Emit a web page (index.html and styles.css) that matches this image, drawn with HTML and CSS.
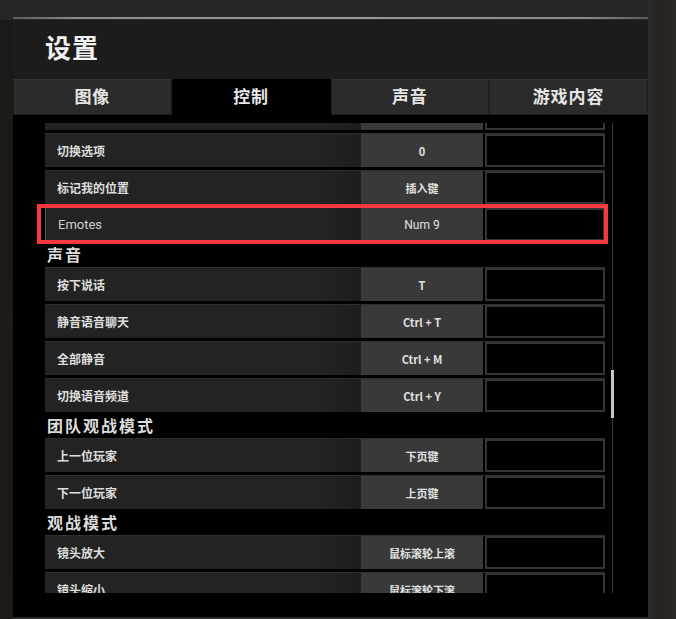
FILE: index.html
```html
<!DOCTYPE html>
<html lang="zh-CN">
<head>
    <meta charset="UTF-8">
    <meta name="viewport" content="width=device-width, initial-scale=1.0">
    <title>设置</title>
    <link rel="stylesheet" href="styles.css">
</head>
<body>
    <div class="screen">
        <div class="edge-left"></div>

        <div class="panel">
            <div class="topline"></div>
            <header class="panel-head">
                <h1>设置</h1>
            </header>

            <nav class="tabs">
                <a class="tab">图像</a>
                <a class="tab active">控制</a>
                <a class="tab">声音</a>
                <a class="tab">游戏内容</a>
            </nav>

            <main class="panel-body">
                <div class="list">
                    <div class="rows">
                        <div class="row partial">
                            <div class="label"></div>
                            <div class="key"></div>
                            <div class="slot"></div>
                        </div>
                        <div class="row">
                            <div class="label">切换选项</div>
                            <div class="key">0</div>
                            <div class="slot"></div>
                        </div>
                        <div class="row">
                            <div class="label">标记我的位置</div>
                            <div class="key">插入键</div>
                            <div class="slot"></div>
                        </div>
                        <div class="row marked">
                            <div class="label latin">Emotes</div>
                            <div class="key latin">Num 9</div>
                            <div class="slot"></div>
                            <div class="highlight"></div>
                        </div>

                        <h2 class="group">声音</h2>
                        <div class="row">
                            <div class="label">按下说话</div>
                            <div class="key">T</div>
                            <div class="slot"></div>
                        </div>
                        <div class="row">
                            <div class="label">静音语音聊天</div>
                            <div class="key">Ctrl + T</div>
                            <div class="slot"></div>
                        </div>
                        <div class="row">
                            <div class="label">全部静音</div>
                            <div class="key">Ctrl + M</div>
                            <div class="slot"></div>
                        </div>
                        <div class="row">
                            <div class="label">切换语音频道</div>
                            <div class="key">Ctrl + Y</div>
                            <div class="slot"></div>
                        </div>

                        <h2 class="group">团队观战模式</h2>
                        <div class="row">
                            <div class="label">上一位玩家</div>
                            <div class="key">下页键</div>
                            <div class="slot"></div>
                        </div>
                        <div class="row">
                            <div class="label">下一位玩家</div>
                            <div class="key">上页键</div>
                            <div class="slot"></div>
                        </div>

                        <h2 class="group">观战模式</h2>
                        <div class="row">
                            <div class="label">镜头放大</div>
                            <div class="key">鼠标滚轮上滚</div>
                            <div class="slot"></div>
                        </div>
                        <div class="row">
                            <div class="label">镜头缩小</div>
                            <div class="key">鼠标滚轮下滚</div>
                            <div class="slot"></div>
                        </div>
                    </div>

                    <div class="scrollbar">
                        <div class="thumb"></div>
                    </div>
                </div>
            </main>
            <div class="bottomline"></div>
        </div>

        <div class="edge-right"></div>
    </div>
</body>
</html>
```

FILE: styles.css
```css
:root {
    --panel: #1c1c1c;
    --tab: #2b2b2b;
    --cell: #232323;
    --key: #393939;
    --text: #e2e2e2;
    --red: #f5393e;
}

* {
    box-sizing: border-box;
    margin: 0;
    padding: 0;
    font-family: 'Noto Sans CJK SC', 'Noto Sans', sans-serif;
}

body {
    background: #262626;
    color: var(--text);
}

.screen {
    display: flex;
    width: 676px;
    height: 619px;
    overflow: hidden;
}

.edge-left {
    width: 13px;
    background: linear-gradient(#262626 0, #262626 20px, #1c1a18 20px, #1e1a16 100%);
}

.edge-right {
    flex: 1;
    background: linear-gradient(90deg, #2a2a2a, #262422 40%, #2b2724);
}

.panel {
    width: 635px;
    display: flex;
    flex-direction: column;
}

.topline {
    margin-top: 17px;
    height: 3px;
    background: linear-gradient(90deg, #5a5a5a 0, #8c8c8c 10%, #9a9a9a 50%, #8a8a8a 90%, #5a5a5a 100%);
    border-bottom: 1px solid #2a2a2a;
}

.panel-head {
    height: 59px;
    background: var(--panel);
    padding: 0 0 5px 32px;
    display: flex;
    align-items: center;
}

h1 {
    font-size: 26px;
    font-weight: 700;
    color: #f2f2f2;
    letter-spacing: 1px;
    line-height: 1;
}

.tabs {
    display: grid;
    grid-template-columns: repeat(4, 1fr);
    height: 36px;
    background: var(--panel);
}

.tab {
    display: flex;
    align-items: center;
    justify-content: center;
    padding-bottom: 3px;
    background: var(--tab);
    border: 1px solid #1e1e1e;
    border-top-color: #333;
    font-size: 17px;
    font-weight: 700;
    letter-spacing: 1px;
    color: #e6e6e6;
}

.tab.active {
    background: #000;
    border-color: #000;
}

.panel-body {
    height: 502px;
    background: #000;
    padding: 8px 0 0 24px;
}

.bottomline {
    height: 2px;
    background: #2c2c2c;
}

.list {
    display: flex;
    gap: 3px;
    height: 470px;
}

/* side padding leaves room for the red frame */
.rows {
    width: 571px;
    height: 470px;
    padding: 0 3px 0 8px;
    overflow: hidden;
    display: flex;
    flex-direction: column;
    gap: 3px;
}

.row {
    position: relative;
    flex: none;
    display: flex;
    height: 34px;
    border-top: 1px solid #2f2f2f;
}

.row.partial {
    margin-top: -27px;
}

.label {
    width: 316px;
    background: linear-gradient(90deg, var(--cell) 88%, #1d1d1d 100%);
    display: flex;
    align-items: center;
    padding-left: 12px;
    font-size: 12px;
    font-weight: 700;
    color: #dedede;
}

.key {
    width: 122px;
    background: var(--key);
    display: flex;
    align-items: center;
    justify-content: center;
    font-size: 11px;
    font-weight: 700;
    color: #e0e0e0;
}

.slot {
    flex: 1;
    margin-left: 2px;
    background: #000;
    border: 2px solid #353535;
}

.latin {
    font-family: 'Roboto', 'Liberation Sans', sans-serif;
    font-weight: 400;
}

.label.latin {
    font-size: 13px;
    color: #d0d0d0;
    border-left: 1px solid #555;
}

.key.latin {
    font-size: 12px;
}

.highlight {
    position: absolute;
    z-index: 1;
    left: -8px;
    right: -3px;
    top: -4px;
    bottom: -3px;
    border: 4px solid var(--red);
}

.group {
    flex: none;
    height: 20px;
    padding-left: 2px;
    font-size: 16px;
    font-weight: 700;
    letter-spacing: 2px;
    line-height: 20px;
    color: #dcdcdc;
}

.scrollbar {
    position: relative;
    width: 3px;
    border-left: 1px solid #3a3a3a;
    margin-left: 1px;
}

.thumb {
    position: absolute;
    left: -2px;
    top: 247px;
    width: 3px;
    height: 48px;
    background: #c8c8c8;
}
```
